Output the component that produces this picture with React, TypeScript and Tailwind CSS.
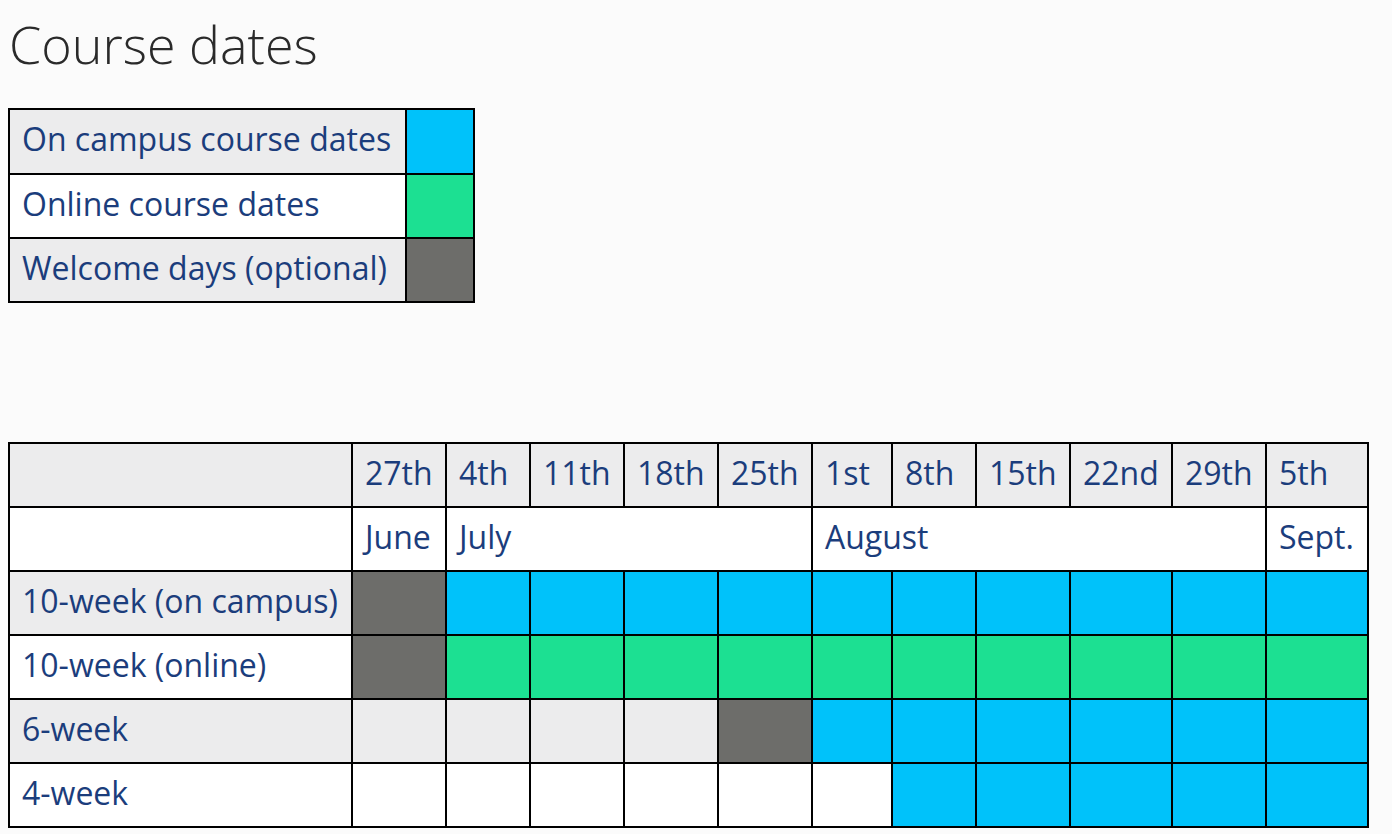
import React from 'react';

const BLUE = 'bg-[#00c2fa]';
const GREEN = 'bg-[#1ce092]';
const GREY = 'bg-[#6d6d6a]';

const dates = ['27th', '4th', '11th', '18th', '25th', '1st', '8th', '15th', '22nd', '29th', '5th'];
const widths = ['w-[94px]', 'w-[84px]', 'w-[94px]', 'w-[94px]', 'w-[94px]', 'w-[80px]', 'w-[84px]', 'w-[94px]', 'w-[102px]', 'w-[94px]', 'w-[102px]'];

type Row = { label: string; cells: string[]; striped: boolean };

const rows: Row[] = [
  { label: '10-week (on campus)', cells: [GREY, ...Array(10).fill(BLUE)], striped: true },
  { label: '10-week (online)', cells: [GREY, ...Array(10).fill(GREEN)], striped: false },
  { label: '6-week', cells: ['', '', '', '', GREY, ...Array(6).fill(BLUE)], striped: true },
  { label: '4-week', cells: ['', '', '', '', '', '', ...Array(5).fill(BLUE)], striped: false },
];

const cell = 'border-2 border-black px-3 pb-[5px] text-left font-normal align-middle';

const App = () => {
  return (
    <div className="min-h-screen w-full bg-[#fbfbfb] px-2 pt-[14px] font-['Open_Sans',sans-serif] text-[#1b3d7c]">
      <h1 className="text-[52px] leading-[60px] font-light text-[#2a2a2a] pl-px">Course dates</h1>

      {/* Legend */}
      <table className="mt-[34px] w-[465px] table-fixed border-collapse text-[32px] leading-[40px]">
        <colgroup>
          <col className="w-[397px]" />
          <col className="w-[68px]" />
        </colgroup>
        <tbody>
          <tr className="h-[65px] bg-[#ececed]">
            <td className={cell}>On campus course dates</td>
            <td className={`${cell} ${BLUE}`} />
          </tr>
          <tr className="h-[64px] bg-white">
            <td className={cell}>Online course dates</td>
            <td className={`${cell} ${GREEN}`} />
          </tr>
          <tr className="h-[64px] bg-[#ececed]">
            <td className={cell}>Welcome days (optional)</td>
            <td className={`${cell} ${GREY}`} />
          </tr>
        </tbody>
      </table>

      {/* Schedule */}
      <table className="mt-[139px] w-[1359px] table-fixed border-collapse text-[32px] leading-[40px]">
        <colgroup>
          <col className="w-[343px]" />
          {widths.map((w, i) => (
            <col key={i} className={w} />
          ))}
        </colgroup>
        <thead>
          <tr className="h-[64px] bg-[#ececed]">
            <th className={cell} />
            {dates.map((d) => (
              <th key={d} className={cell}>
                {d}
              </th>
            ))}
          </tr>
        </thead>
        <tbody>
          <tr className="h-[64px] bg-white">
            <td className={cell} />
            <td className={cell}>June</td>
            <td className={cell} colSpan={4}>July</td>
            <td className={cell} colSpan={5}>August</td>
            <td className={cell}>Sept.</td>
          </tr>
          {rows.map((r) => (
            <tr key={r.label} className={`h-[64px] ${r.striped ? 'bg-[#ececed]' : 'bg-white'}`}>
              <td className={cell}>{r.label}</td>
              {r.cells.map((c, i) => (
                <td key={i} className={`${cell} ${c}`} />
              ))}
            </tr>
          ))}
        </tbody>
      </table>
    </div>
  );
};

export default App;
